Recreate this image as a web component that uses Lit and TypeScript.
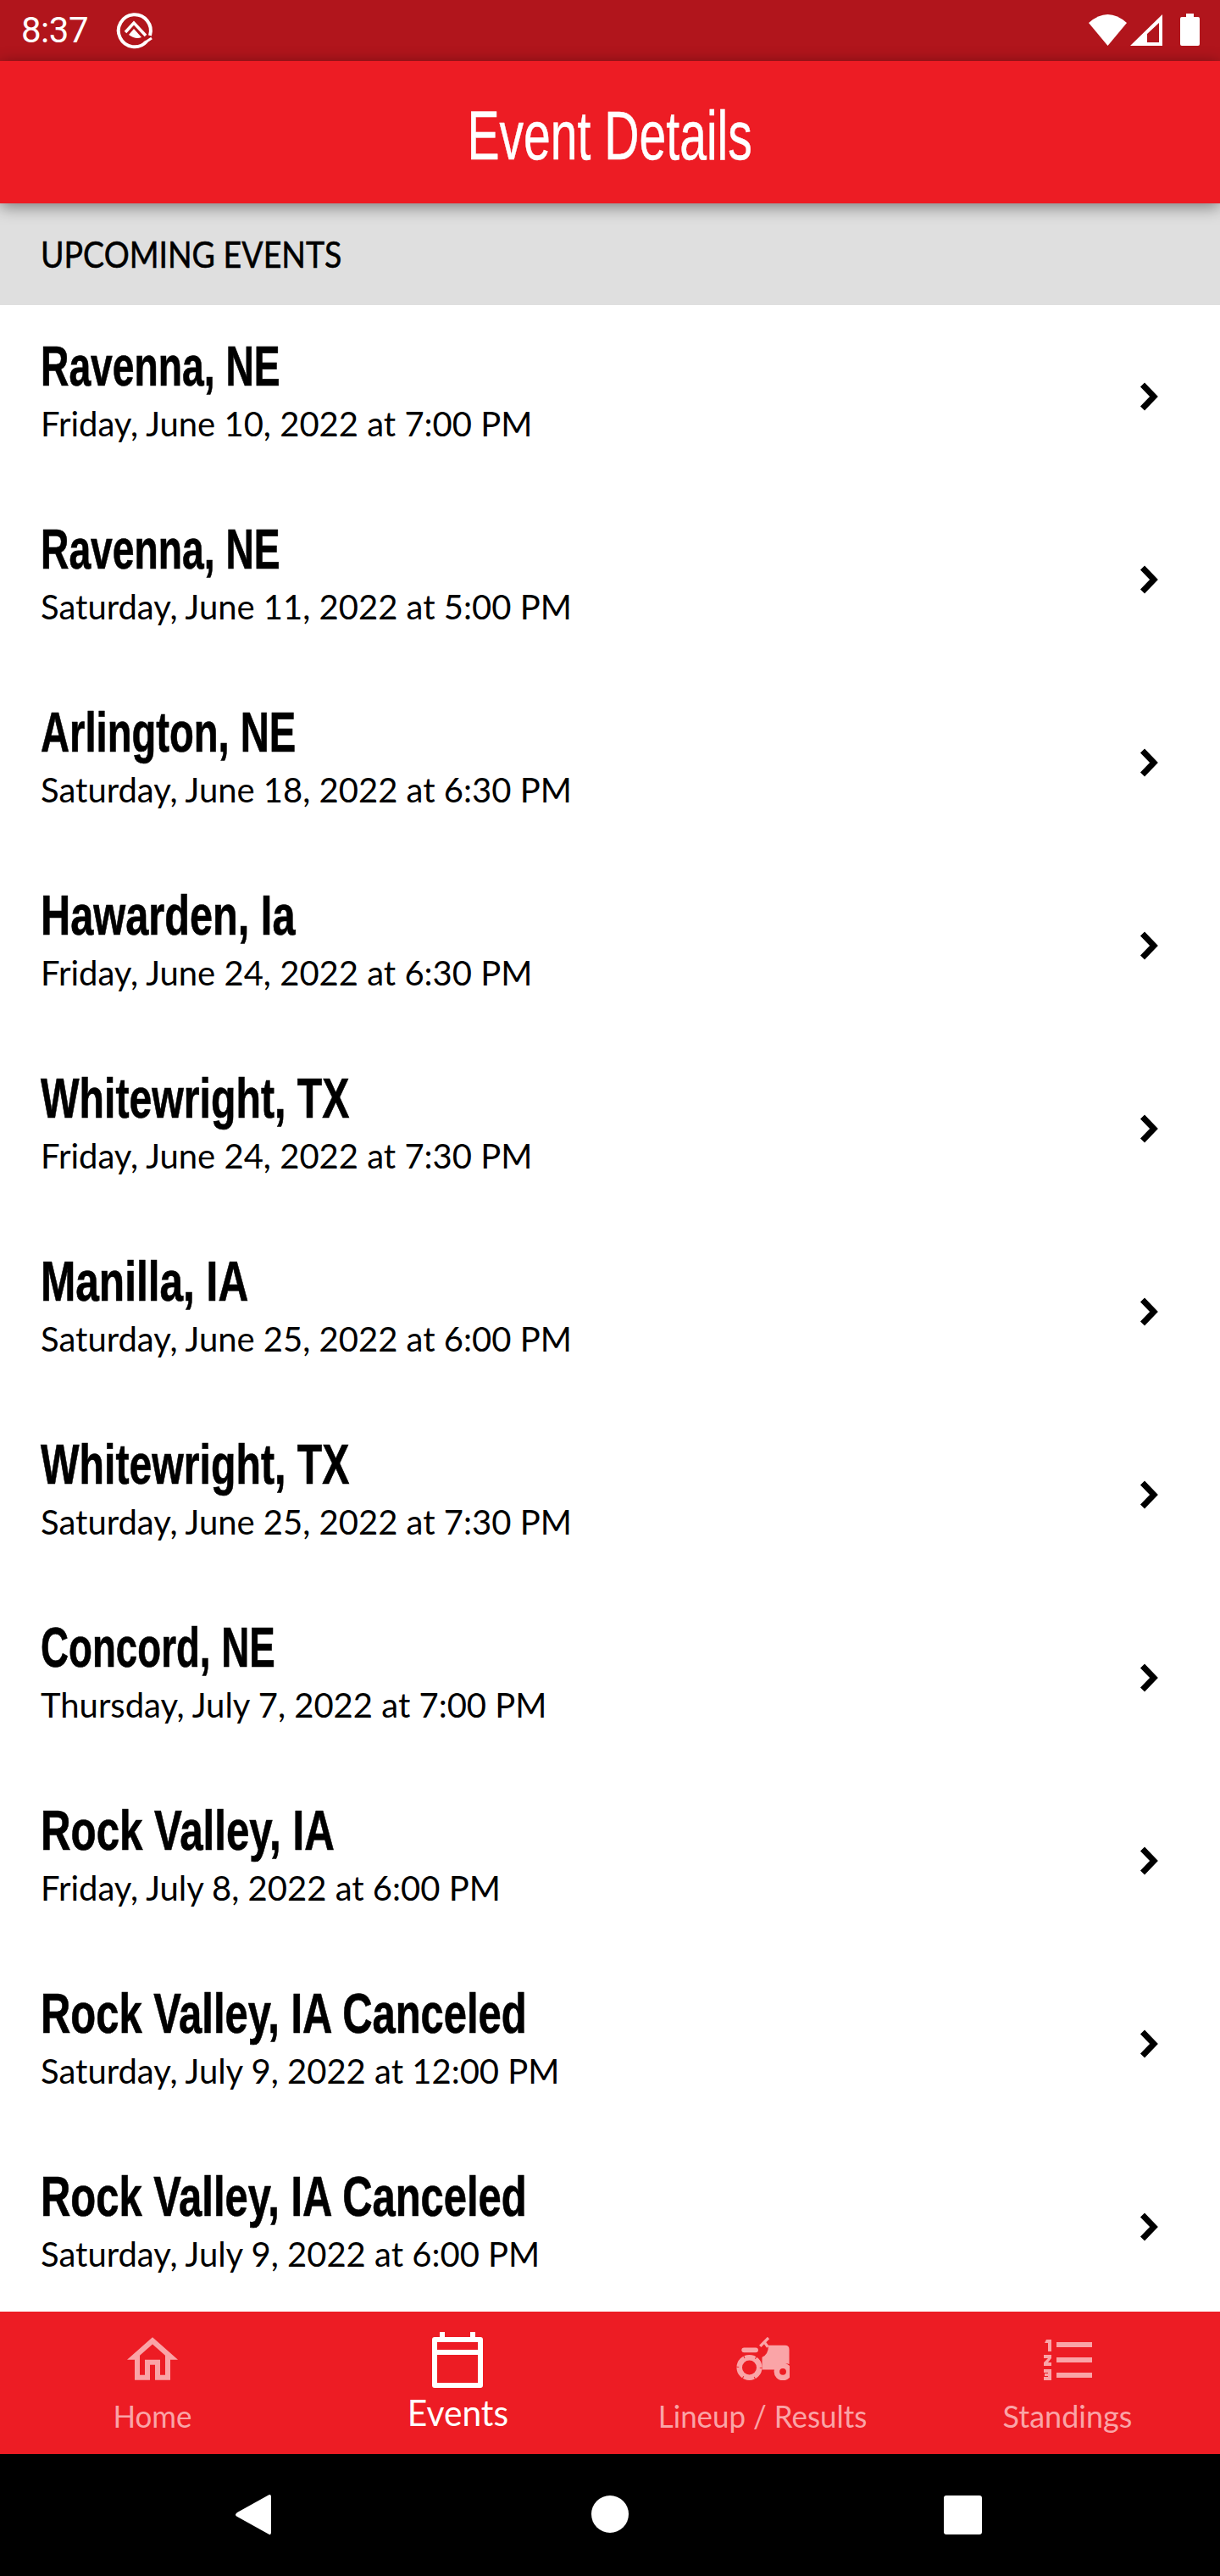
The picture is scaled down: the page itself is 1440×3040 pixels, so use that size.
import { LitElement, html, css } from "lit";
import { customElement } from "lit/decorators.js";
import { styleMap } from "lit/directives/style-map.js";

const EVENTS: [string, string, number][] = [
  ["Ravenna, NE", "Friday, June 10, 2022 at 7:00 PM", 0.69],
  ["Ravenna, NE", "Saturday, June 11, 2022 at 5:00 PM", 0.69],
  ["Arlington, NE", "Saturday, June 18, 2022 at 6:30 PM", 0.704],
  ["Hawarden, Ia", "Friday, June 24, 2022 at 6:30 PM", 0.727],
  ["Whitewright, TX", "Friday, June 24, 2022 at 7:30 PM", 0.72],
  ["Manilla, IA", "Saturday, June 25, 2022 at 6:00 PM", 0.74],
  ["Whitewright, TX", "Saturday, June 25, 2022 at 7:30 PM", 0.72],
  ["Concord, NE", "Thursday, July 7, 2022 at 7:00 PM", 0.682],
  ["Rock Valley, IA", "Friday, July 8, 2022 at 6:00 PM", 0.735],
  ["Rock Valley, IA Canceled", "Saturday, July 9, 2022 at 12:00 PM", 0.73],
  ["Rock Valley, IA Canceled", "Saturday, July 9, 2022 at 6:00 PM", 0.73],
];

@customElement("app-root")
export class AppRoot extends LitElement {
  static styles = css`
    :host { display: block; width: 1440px; height: 3040px; }
    .page { width: 1440px; height: 3040px; display: flex; flex-direction: column; background: #fff; overflow: hidden; font-family: "Liberation Sans", sans-serif; }
    .status { height: 72px; flex: none; background: #b1151c; display: flex; align-items: center; padding: 0 24px 0 25px; box-sizing: border-box; color: #fff; }
    .time { font: 400 42px/72px Roboto, sans-serif; letter-spacing: -0.5px; width: 105px; }
    .status svg { display: block; }
    .status .right { margin-left: auto; }
    .appbar { height: 168px; flex: none; box-sizing: border-box; padding-top: 8px; background: #ed1c24; color: #fff; display: flex; align-items: center; justify-content: center; position: relative; z-index: 2; box-shadow: 0 4px 18px rgba(0,0,0,.45); }
    .appbar span { display: inline-block; font: 400 81px/1 "Liberation Sans", sans-serif; transform: scaleX(.705); white-space: nowrap; -webkit-text-stroke: .5px #fff; }
    .section { height: 120px; flex: none; background: #dfdfdf; display: flex; align-items: center; padding-left: 48px; color: #000; }
    .section span { display: inline-block; font: 400 42px/1 Lato, sans-serif; -webkit-text-stroke: .6px #000; transform: scaleX(.893); transform-origin: left center; white-space: nowrap; }
    .list { flex: 1; min-height: 0; overflow: hidden; }
    .row { height: 216px; box-sizing: border-box; padding-left: 48px; display: flex; align-items: center; }
    .text { flex: 1; min-width: 0; display: flex; flex-direction: column; align-items: flex-start; align-self: flex-start; padding-top: 36px; }
    .name { font: 700 67px/72px "Liberation Sans", sans-serif; color: #000; transform-origin: left center; white-space: nowrap; -webkit-text-stroke: .7px #000; }
    .date { margin-top: 10px; font: 400 40px/44px Lato, sans-serif; color: #000; white-space: nowrap; }
    .chev { width: 72px; height: 72px; margin-right: 36px; flex: none; }
    .nav { height: 168px; flex: none; background: #ed1c24; display: grid; grid-template-columns: repeat(4, 360px); position: relative; z-index: 2; }
    .tab { display: flex; flex-direction: column; align-items: center; color: #faa4a7; font: 400 36px/40px Lato, sans-serif; padding-top: 30px; box-sizing: border-box; }
    .tab svg { display: block; }
    .tab .lbl { margin-top: 22px; white-space: nowrap; transform: scaleX(.97); }
    .tab .lbl.full { transform: none; }
    .tab.on { color: #fff; font: 400 42px/44px Lato, sans-serif; padding-top: 24px; }
    .tab.on .lbl { margin-top: 7px; }
    .sysnav { height: 144px; flex: none; background: #000; }
    .sysnav svg { display: block; width: 1440px; height: 144px; }
  `;

  render() {
    return html`<div class="page">
      <div class="status">
        <span class="time">8:37</span>
        <svg width="60" height="50" viewBox="0 0 60 50" style="margin-top:-4px"><path d="M43 40 A19 19 0 1 1 47 33" fill="none" stroke="#fff" stroke-width="4"/><path d="M40 42 L49 36" stroke="#fff" stroke-width="3"/><path d="M18 29 L28 18 L42 33" fill="none" stroke="#fff" stroke-width="3.500"/><path d="M28 25 L37 35 Q30 38 22 32 Z" fill="#fff"/></svg>
        <svg class="right" width="131" height="40" viewBox="1285 16 131 40"><path d="M1285 27 Q1307.500 7 1330 27 L1307.500 54 Z" fill="#fff"/><path fill-rule="evenodd" d="M1372 17 V54 H1334 Z M1368 27 L1354 40 V50 H1368Z" fill="#fff"/><path d="M1400 16 H1409 V20 H1414 Q1416 20 1416 22 V52 Q1416 54 1414 54 H1395 Q1393 54 1393 52 V22 Q1393 20 1395 20 H1400 Z" fill="#fff"/></svg>
      </div>
      <div class="appbar"><span>Event Details</span></div>
      <div class="section"><span>UPCOMING EVENTS</span></div>
      <div class="list">
        ${EVENTS.map(([n, d, k]) => html`<div class="row"><div class="text"><div class="name" style=${styleMap({ transform: `scaleX(${k})` })}>${n}</div><div class="date">${d}</div></div>
          <svg class="chev" viewBox="0 0 72 72"><path d="M16.500 22 L30 36 L16.500 50" fill="none" stroke="#000" stroke-width="7"/></svg></div>`)}
      </div>
      <div class="nav">
        <div class="tab"><svg width="60" height="51" viewBox="90 55 180 152"><path fill-rule="evenodd" fill="#faa4a7" d="M180 55 L270 135 H243 V207 H189 V153 H171 V207 H117 V135 H90 Z M180 80 L135 120 V189 H153 V135 H207 V189 H225 V120 Z"/></svg><span class="lbl">Home</span></div>
        <div class="tab on"><svg width="60" height="66" viewBox="0 0 60 66"><path fill-rule="evenodd" fill="#fff" d="M9 0 H15 V6 H45 V0 H51 V6 H57 Q60 6 60 9 V63 Q60 66 57 66 H3 Q0 66 0 63 V9 Q0 6 3 6 H9 Z M6 12 V21 H54 V12 Z M6 27 V60 H54 V27 Z"/></svg><span class="lbl">Events</span></div>
        <div class="tab"><svg width="63" height="51" viewBox="140 82 190 156"><path fill="#faa4a7" d="M255 112 H315 Q330 112 330 127 V180 Q300 168 278 200 H232 V155 Q255 145 255 112 Z"/><rect x="158" y="120" width="60" height="18" rx="9" fill="#faa4a7"/><path d="M225 115 L255 85 M240 100 L253 118" stroke="#faa4a7" stroke-width="10" fill="none"/><circle cx="186" cy="192" r="36" fill="#ed1c24" stroke="#faa4a7" stroke-width="20"/><circle cx="186" cy="192" r="42" fill="none" stroke="#ed1c24" stroke-width="9" stroke-dasharray="3 40.980"/><circle cx="307" cy="207" r="22" fill="#ed1c24" stroke="#faa4a7" stroke-width="20"/></svg><span class="lbl">Lineup / Results</span></div>
        <div class="tab"><svg width="57" height="51" viewBox="0 -3 57 51"><path fill="#faa4a7" d="M15 3 H57 V9 H15 Z M15 21 H57 V27 H15 Z M15 39 H57 V45 H15 Z M3 0 H9 V14 H5 V4 H1Z M0 18 H9 V22 L5 27 H9 V31 H0 V27 L5 22 H0 Z M0 35 H9 V48 H0 V44 H5 V43 H1 V40 H5 V39 H0 Z"/></svg><span class="lbl full">Standings</span></div>
      </div>
      <div class="sysnav"><svg viewBox="0 2896 1440 144"><path d="M316 2945 Q320 2942 320 2947 V2988 Q320 2993 316 2990 L280 2970 Q276 2968 280 2965 Z" fill="#fff"/><circle cx="720" cy="2967" r="22" fill="#fff"/><rect x="1114" y="2945" width="45" height="46" rx="3" fill="#fff"/></svg></div>
    </div>`;
  }
}
